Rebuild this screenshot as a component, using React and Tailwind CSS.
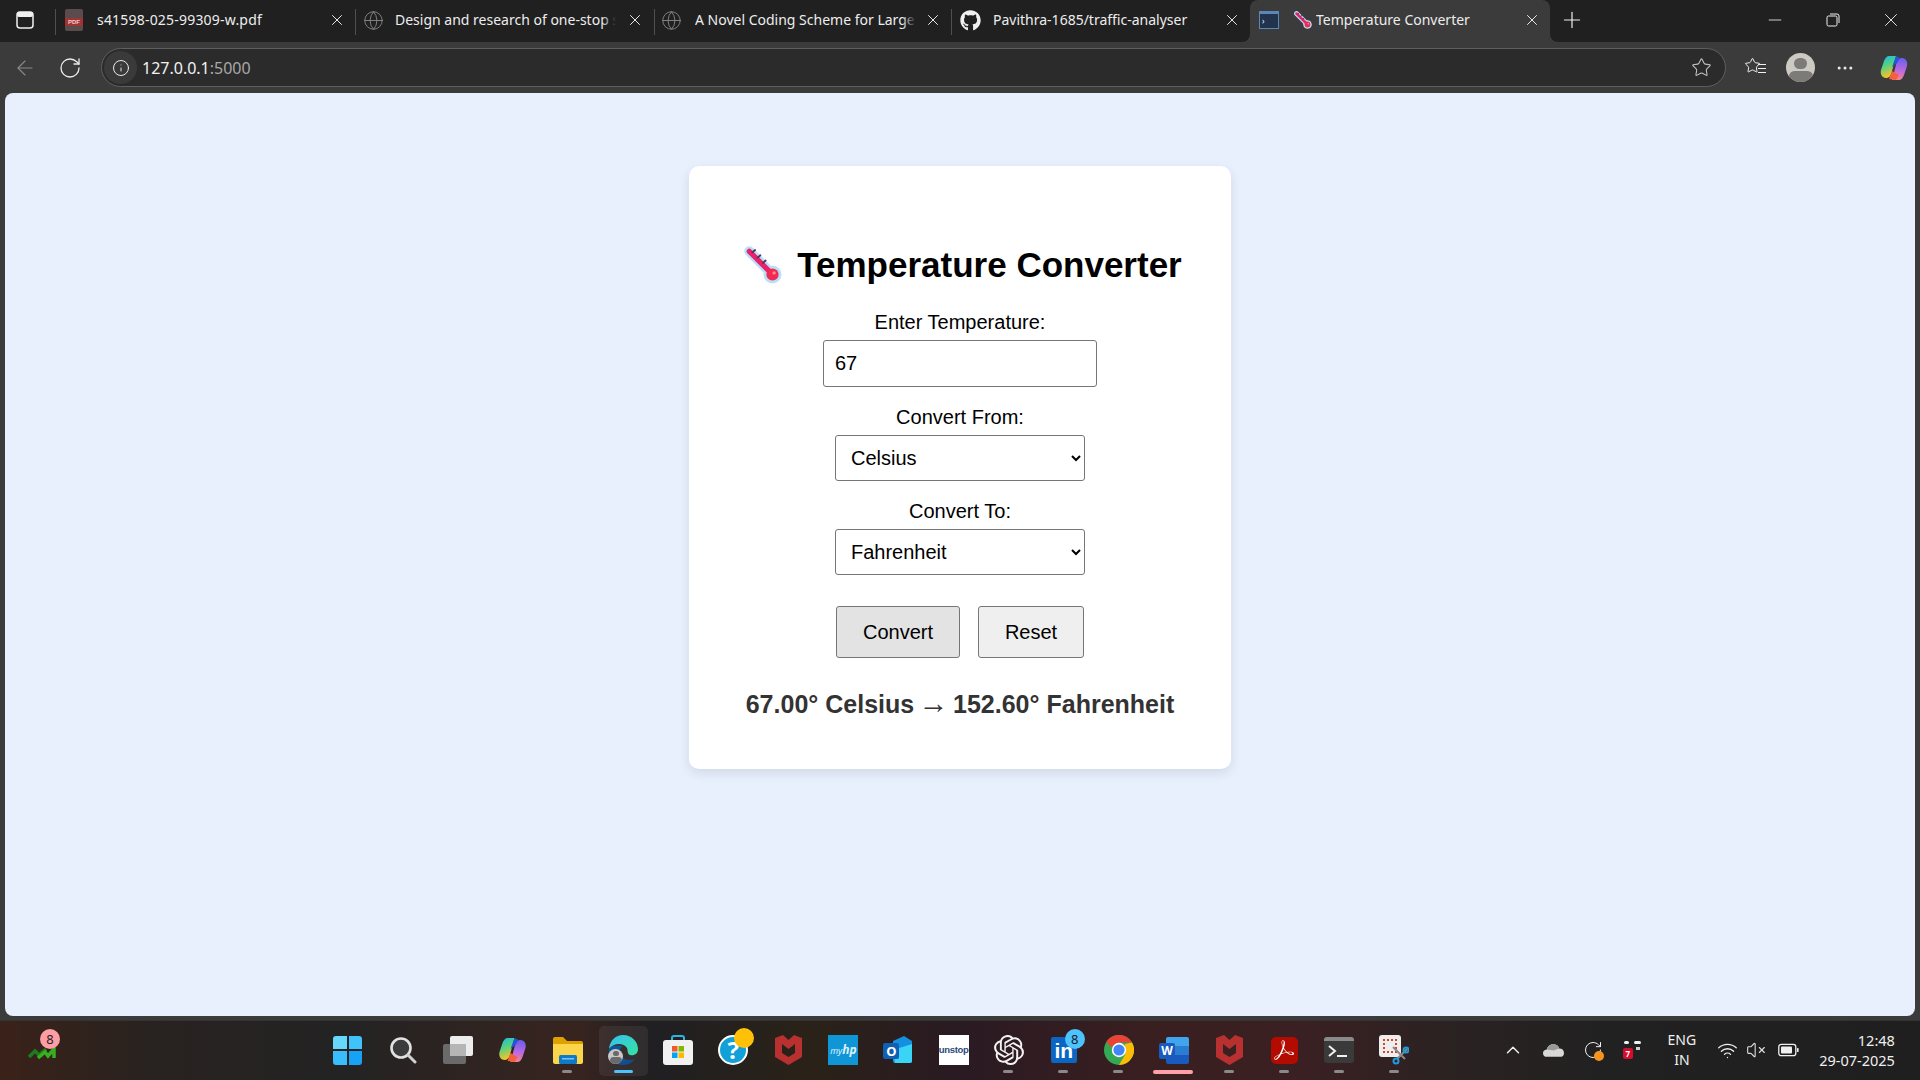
import React from 'react';
import { ArrowLeft, RotateCw, Info, X, Plus, Minus, Star, Globe, ChevronUp, Wifi, VolumeX, MoreHorizontal } from 'lucide-react';
import { FaGithub } from 'react-icons/fa';
import { SiOpenai, SiAdobeacrobatreader } from 'react-icons/si';

const Thermo = ({ className }) => (
  <svg viewBox="0 0 36 36" className={className}>
    <line x1="5" y1="5" x2="27" y2="27" stroke="#b9e0fa" strokeWidth="9.5" strokeLinecap="round" />
    <circle cx="27" cy="27" r="8.5" fill="#b9e0fa" />
    <line x1="5" y1="5" x2="26" y2="26" stroke="#e9236b" strokeWidth="5" strokeLinecap="round" />
    <circle cx="27" cy="27" r="5.8" fill="#f02a50" />
    <circle cx="28.5" cy="25.5" r="1.6" fill="#ff8a9a" />
    <path d="M8 4 L10.5 1.8 M13 9 L15.5 6.8 M18 14 L20.5 11.8" transform="translate(0 2)" stroke="#4a3a5a" strokeWidth="1.8" strokeLinecap="round" />
  </svg>
);

const Copilot = ({ className }) => (
  <svg viewBox="0 0 28 28" className={className}>
    <defs>
      <linearGradient id="cpa" x1="0" y1="0" x2="0.3" y2="1"><stop offset="0" stopColor="#1fb6e8" /><stop offset="0.45" stopColor="#4ad28a" /><stop offset="1" stopColor="#f6c228" /></linearGradient>
      <linearGradient id="cpb" x1="0.6" y1="0" x2="0.5" y2="1"><stop offset="0" stopColor="#6a5cf0" /><stop offset="0.6" stopColor="#c06adf" /><stop offset="1" stopColor="#f4848a" /></linearGradient>
    </defs>
    <path d="M9 2 L16 2 L12 17 C11 22 9 24 6 24 C2 24 0 20 1 16 L4 7 C5 4 7 2 9 2Z" fill="url(#cpa)" />
    <path d="M19 26 L12 26 L16 11 C17 6 19 4 22 4 C26 4 28 8 27 12 L24 21 C23 24 21 26 19 26Z" fill="url(#cpb)" />
    <path d="M12 17 L9 25 L16 26 L19 21Z" fill="#f2603c" />
    <path d="M16 2 L12 13 L17 9 L20 4 Z" fill="#2257d8" />
  </svg>
);

const Edge = () => (
  <div className="relative w-[30px] h-[30px]">
    <svg viewBox="0 0 30 30" className="w-[30px] h-[30px]">
      <defs>
        <linearGradient id="ega" x1="0" y1="0" x2="1" y2="1"><stop offset="0" stopColor="#35c1f1" /><stop offset="1" stopColor="#36e2a0" /></linearGradient>
        <linearGradient id="egb" x1="0" y1="0" x2="1" y2="1"><stop offset="0" stopColor="#0c59a4" /><stop offset="1" stopColor="#114a8b" /></linearGradient>
      </defs>
      <path d="M1 14 C2 5 8 0 15 0 C24 0 30 7 30 14 C30 19 26 21 22 20 C19 19 20 15 19 13 C16 8 6 7 1 14Z" fill="url(#ega)" />
      <path d="M1 14 C0 23 7 30 15 30 C20 30 25 27 27 24 C22 26 14 25 12 19 C11 15 13 12 15 11 C9 10 4 10 1 14Z" fill="url(#egb)" />
    </svg>
    <div className="absolute left-0 bottom-[1px] w-[15px] h-[15px] rounded-full bg-[#c8c8c8] overflow-hidden flex flex-col items-center">
      <div className="w-[6px] h-[6px] rounded-full bg-[#6a6a6a] mt-[2px]" />
      <div className="w-[12px] h-[8px] rounded-full bg-[#6a6a6a] mt-[1px]" />
    </div>
  </div>
);

const McAfee = ({ className }) => (
  <svg viewBox="0 0 27 30" className={className}>
    <path d="M0 3 L8 0 L13.5 5 L19 0 L27 3 L27 22 L13.5 30 L0 22Z M7 9 L7 18 L13.5 22 L20 18 L20 9 L13.5 14Z" fill="#b8302f" fillRule="evenodd" />
  </svg>
);

const Sep = () => <div className="w-px h-[26px] mt-[3px] bg-[#4f4f4f] shrink-0" />;

const CloseX = ({ cls }) => <X className={cls} size={18} strokeWidth={1.3} color="#ececec" />;

const Fade = () => <div className="absolute right-0 top-0 bottom-0 w-[14px] bg-gradient-to-r from-transparent to-[#202020]" />;

const Slot = ({ children, dot, wide }) => (
  <div className="relative w-[55.1px] h-full flex items-center justify-center shrink-0">
    {children}
    {dot && <div className="absolute bottom-[6px] left-[22px] w-[10px] h-[3px] rounded-full bg-[#8a8a8a]" />}
    {wide && <div className="absolute bottom-[5px] left-[7px] w-[40px] h-[4px] rounded-full bg-[#ffa0a8]" />}
  </div>
);

export default function App() {
  return (
    <div className="w-[1920px] h-[1080px] flex flex-col overflow-hidden bg-[#3b3b3b] font-['Liberation_Sans',sans-serif]">
      {/* tab strip */}
      <div className="h-[42px] flex shrink-0 text-[14px] text-[#ededed] font-['Noto_Sans',sans-serif]">
        <div className="w-[1250px] h-full bg-[#202020] rounded-br-lg flex items-center pb-[2px]">
          <svg viewBox="0 0 18 18" className="w-[18px] h-[18px] ml-[16px] mr-[21px] shrink-0">
            <rect x="1" y="1" width="16" height="16" rx="3" fill="none" stroke="#f0f0f0" strokeWidth="1.5" />
            <rect x="1" y="1" width="16" height="5" rx="2" fill="#f0f0f0" />
          </svg>
          <Sep />
          <div className="w-[299px] flex items-center shrink-0">
            <div className="ml-[9px] w-[18px] h-[22px] bg-[#5a4c4c] rounded-[2px] flex items-center justify-center shrink-0">
              <span className="w-full mt-[4px] bg-[#a03434] text-center text-[6px] leading-[8px] font-bold text-[#f0d0d0] font-['Liberation_Sans',sans-serif]">PDF</span>
            </div>
            <span className="ml-[14px] -mt-[2px] w-[230px] tracking-[0.2px] whitespace-nowrap overflow-hidden">s41598-025-99309-w.pdf</span>
            <CloseX cls="ml-[1px] shrink-0" />
          </div>
          <Sep />
          <div className="w-[298px] flex items-center shrink-0">
            <Globe size={21} strokeWidth={1} color="#8c8c8c" className="ml-[7px] shrink-0" />
            <span className="relative ml-[11px] -mt-[2px] w-[221px] whitespace-nowrap overflow-hidden">Design and research of one-stop s<Fade /></span>
            <CloseX cls="ml-[10px] shrink-0" />
          </div>
          <Sep />
          <div className="w-[296px] flex items-center shrink-0">
            <Globe size={21} strokeWidth={1} color="#8c8c8c" className="ml-[6px] shrink-0" />
            <span className="relative ml-[13px] -mt-[2px] w-[221px] whitespace-nowrap overflow-hidden">A Novel Coding Scheme for Large<Fade /></span>
            <CloseX cls="ml-[8px] shrink-0" />
          </div>
          <Sep />
          <div className="flex items-center flex-1">
            <FaGithub size={21} color="#f0f0f0" className="ml-[8px] shrink-0" />
            <span className="ml-[12px] -mt-[2px] w-[229px] whitespace-nowrap overflow-hidden">Pavithra-1685/traffic-analyser</span>
            <CloseX cls="ml-[1px] shrink-0" />
          </div>
        </div>
        <div className="w-[300px] h-full bg-[#202020]">
          <div className="h-full bg-[#3b3b3b] rounded-t-lg flex items-center pb-[2px]">
            <div className="ml-[9px] w-[20px] h-[18px] bg-[#22344d] border border-[#5a86b8] border-t-[3px] shrink-0 flex items-center">
              <span className="ml-[2px] text-[8px] leading-none text-white">›</span>
            </div>
            <Thermo className="ml-[15px] w-[18px] h-[18px] shrink-0" />
            <span className="ml-[4px] -mt-[2px] w-[206px] whitespace-nowrap overflow-hidden">Temperature Converter</span>
            <CloseX cls="ml-[1px] shrink-0" />
          </div>
        </div>
        <div className="flex-1 h-full bg-[#202020] rounded-bl-lg flex items-center pb-[2px]">
          <Plus size={26} strokeWidth={1.1} color="#f0f0f0" className="ml-[9px]" />
          <Minus size={20} strokeWidth={1} color="#f0f0f0" className="ml-[180px]" />
          <svg viewBox="0 0 14 14" className="w-[14px] h-[14px] ml-[41px]">
            <rect x="1" y="3" width="10" height="10" rx="1.5" fill="none" stroke="#f0f0f0" strokeWidth="1" />
            <path d="M4 1 H11 Q13 1 13 3 V10" fill="none" stroke="#f0f0f0" strokeWidth="1" />
          </svg>
          <X size={22} strokeWidth={1} color="#f0f0f0" className="ml-[40px]" />
        </div>
      </div>

      {/* toolbar */}
      <div className="h-[51px] flex items-center shrink-0">
        <ArrowLeft size={24} strokeWidth={1.1} color="#8a8a8a" className="ml-[13px]" />
        <RotateCw size={24} strokeWidth={1.3} color="#ececec" className="ml-[21px]" />
        <div className="ml-[19px] w-[1625px] h-[39px] rounded-full bg-[#2b2b2b] border border-[#5f5f5f] flex items-center font-['Noto_Sans',sans-serif]">
          <div className="ml-[2px] w-[33px] h-[33px] rounded-full bg-[#3a3a3a] flex items-center justify-center shrink-0">
            <Info size={18} strokeWidth={1.3} color="#ececec" />
          </div>
          <span className="ml-[5px] text-[16px] text-[#f2f2f2]">127.0.0.1<span className="text-[#a8a8a8]">:5000</span></span>
          <Star size={21} strokeWidth={1.2} color="#c4c4c4" className="ml-auto mr-[13px]" />
        </div>
        <div className="ml-[18px] relative w-[22px] h-[22px] shrink-0">
          <Star size={17} strokeWidth={1.4} color="#f0f0f0" />
          <div className="absolute right-0 top-[7px] w-[8px] h-px bg-[#f0f0f0]" />
          <div className="absolute right-0 top-[11px] w-[8px] h-px bg-[#f0f0f0]" />
          <div className="absolute right-0 top-[15px] w-[8px] h-px bg-[#f0f0f0]" />
        </div>
        <div className="ml-[20px] w-[29px] h-[29px] rounded-full bg-[#cdcac4] overflow-hidden flex flex-col items-center shrink-0">
          <div className="w-[13px] h-[13px] rounded-full bg-[#7d7b77] mt-[5px]" />
          <div className="w-[24px] h-[14px] rounded-full bg-[#7d7b77] mt-[2px]" />
        </div>
        <MoreHorizontal size={20} strokeWidth={1.6} color="#ececec" className="ml-[20px]" />
        <Copilot className="ml-[25px] w-[28px] h-[28px] shrink-0" />
      </div>

      {/* page */}
      <div className="flex-1 px-[5px] pb-[4px] min-h-0">
        <div className="h-full rounded-lg bg-[#e8f0fe] flex justify-center items-start pt-[73px]">
          <div className="w-[542px] h-[603px] bg-white rounded-[10px] shadow-[0_4px_12px_rgba(0,0,0,0.1)] flex flex-col items-center pt-[81px] text-[20px] leading-[23px] text-black">
            <div className="flex items-center h-[36px] pl-[6px]">
              <Thermo className="w-[38px] h-[38px] shrink-0" />
              <h1 className="ml-[15px] text-[35px] leading-[36px] font-bold whitespace-nowrap">Temperature Converter</h1>
            </div>
            <label className="mt-[28px]">Enter Temperature:</label>
            <input readOnly value="67" className="mt-[6px] w-[274px] h-[47px] px-[11px] bg-white border border-[#767676] rounded-[3px] text-[20px] outline-none" />
            <label className="mt-[19px]">Convert From:</label>
            <select defaultValue="c" className="mt-[6px] w-[250px] h-[46px] px-[11px] bg-white border border-[#767676] rounded-[3px] text-[20px]">
              <option value="c">Celsius</option>
              <option value="f">Fahrenheit</option>
            </select>
            <label className="mt-[19px]">Convert To:</label>
            <select defaultValue="f" className="mt-[6px] w-[250px] h-[46px] px-[11px] bg-white border border-[#767676] rounded-[3px] text-[20px]">
              <option value="c">Celsius</option>
              <option value="f">Fahrenheit</option>
            </select>
            <div className="mt-[31px] flex gap-[18px]">
              <button className="w-[124px] h-[52px] bg-[#e3e3e3] border border-[#767676] rounded-[3px] text-[20px]">Convert</button>
              <button className="w-[106px] h-[52px] bg-[#efefef] border border-[#767676] rounded-[3px] text-[20px]">Reset</button>
            </div>
            <p className="mt-[30px] text-[25px] leading-[28px] font-bold text-[#333333] whitespace-nowrap">67.00° Celsius <span className="font-normal text-[30px] leading-none -mx-[2.5px]">→</span> 152.60° Fahrenheit</p>
          </div>
        </div>
      </div>

      {/* taskbar */}
      <div className="h-[60px] shrink-0 border-t border-[#333333] pb-[1px] flex items-center bg-[linear-gradient(90deg,#3a2219_0%,#282220_8%,#232323_18%,#38241f_30%,#201f22_34%,#2a2218_42%,#2a1a22_50%,#3a1f20_60%,#3a2022_68%,#2a2222_76%,#212121_84%,#1f1f1f_100%)] font-['Noto_Sans',sans-serif]">
        <div className="relative w-[320px] h-full shrink-0">
          <svg viewBox="0 0 28 14" className="absolute left-[28px] top-[25px] w-[28px] h-[14px]">
            <path d="M1 11 L7 5 L11 9 L18 3" fill="none" stroke="#1f7a1f" strokeWidth="3.5" />
            <path d="M10 12 L17 6 L20 10 L26 3 V12" fill="none" stroke="#35b01f" strokeWidth="3.5" />
          </svg>
          <div className="absolute left-[40px] top-[8px] w-[20px] h-[20px] rounded-full bg-[#ff9da4] text-[#222] text-[13px] leading-[20px] text-center">8</div>
        </div>
        <Slot>
          <div className="w-[29px] h-[29px] grid grid-cols-2 gap-[2px]">
            <div className="rounded-tl-[3px] bg-[#66d8fb]" />
            <div className="rounded-tr-[3px] bg-[#40c2fb]" />
            <div className="rounded-bl-[3px] bg-[#3abdfb]" />
            <div className="rounded-br-[3px] bg-[#17a2f5]" />
          </div>
        </Slot>
        <Slot>
          <svg viewBox="0 0 28 28" className="w-[28px] h-[28px]">
            <circle cx="12" cy="12" r="9.5" fill="#3c3c3c" stroke="#e2e2e2" strokeWidth="2.6" />
            <line x1="19" y1="19" x2="26" y2="26" stroke="#d0d0d0" strokeWidth="3" strokeLinecap="round" />
          </svg>
        </Slot>
        <Slot>
          <div className="relative w-[30px] h-[28px]">
            <div className="absolute left-0 bottom-0 w-[23px] h-[20px] rounded-[2px] bg-[#6a6a6a]" />
            <div className="absolute right-0 top-0 w-[23px] h-[20px] rounded-[2px] bg-[#ececec]" />
            <div className="absolute left-[7px] top-[8px] w-[16px] h-[12px] bg-[#b5b5b5]" />
          </div>
        </Slot>
        <Slot><Copilot className="w-[29px] h-[28px]" /></Slot>
        <Slot dot>
          <svg viewBox="0 0 30 27" className="w-[30px] h-[27px]">
            <path d="M0 2 Q0 0 2 0 H10 L14 4 H28 Q30 4 30 6 V10 H0Z" fill="#e0a000" />
            <path d="M0 7 H30 V25 Q30 27 28 27 H2 Q0 27 0 25Z" fill="#fcd64a" />
            <rect x="6" y="18" width="18" height="9" rx="1.5" fill="#0f79c9" />
            <rect x="9" y="21" width="12" height="1.5" fill="#7cc4f2" />
          </svg>
        </Slot>
        <div className="relative w-[55.1px] h-full flex items-center justify-center shrink-0">
          <div className="absolute left-[4px] top-[5px] w-[49px] h-[50px] rounded-[5px] bg-[#ffffff10]" />
          <div className="relative"><Edge /></div>
          <div className="absolute bottom-[6px] left-[19px] w-[19px] h-[3px] rounded-full bg-[#4cc2ff]" />
        </div>
        <Slot>
          <svg viewBox="0 0 30 30" className="w-[30px] h-[30px]">
            <path d="M9 7 V3 Q9 1 11 1 H19 Q21 1 21 3 V7" fill="none" stroke="#2bb3e6" strokeWidth="2" />
            <rect x="0" y="5" width="30" height="25" rx="3" fill="#f1f1f1" />
            <rect x="9" y="11" width="5.5" height="5.5" fill="#f05a28" />
            <rect x="15.5" y="11" width="5.5" height="5.5" fill="#7fba00" />
            <rect x="9" y="17.5" width="5.5" height="5.5" fill="#00a4ef" />
            <rect x="15.5" y="17.5" width="5.5" height="5.5" fill="#ffb900" />
          </svg>
        </Slot>
        <Slot>
          <div className="relative w-[30px] h-[30px] rounded-full bg-[#12a0d8] border-2 border-white flex items-center justify-center">
            <span className="text-white text-[24px] font-bold leading-none">?</span>
            <div className="absolute left-[14px] -top-[9px] w-[20px] h-[20px] rounded-full bg-[#ffc107]" />
          </div>
        </Slot>
        <Slot><McAfee className="w-[27px] h-[30px]" /></Slot>
        <Slot>
          <div className="w-[30px] h-[30px] bg-[#0f96d6] flex items-center justify-center text-[#dff2fb] text-[9px] italic leading-none">my<span className="font-bold text-[12px]">hp</span></div>
        </Slot>
        <Slot>
          <div className="relative w-[30px] h-[30px]">
            <svg viewBox="0 0 30 30" className="w-[30px] h-[30px]">
              <path d="M10 6 L21 1 L29 6 V26 Q29 28 27 28 H12 Q10 28 10 26Z" fill="#1490df" />
              <path d="M10 15 L29 9 V26 Q29 28 27 28 H12 Z" fill="#3ad4f7" />
            </svg>
            <div className="absolute left-0 top-[8px] w-[16px] h-[16px] bg-[#0f5fb5] rounded-[2px] text-white text-[13px] font-bold leading-[16px] text-center">O</div>
          </div>
        </Slot>
        <Slot>
          <div className="w-[30px] h-[30px] bg-white flex items-center justify-center text-[#2a4a78] text-[9.5px] font-bold leading-none tracking-[-0.3px] font-['Liberation_Sans',sans-serif]">unstop</div>
        </Slot>
        <Slot dot><SiOpenai size={30} color="#f2f2f2" /></Slot>
        <Slot dot>
          <div className="relative w-[26px] h-[26px] bg-[#0a66c2] rounded-[2px] flex items-center justify-center text-white text-[21px] font-bold leading-none font-['Liberation_Sans',sans-serif]">
            in
            <div className="absolute left-[14px] -top-[8px] w-[20px] h-[20px] rounded-full bg-[#4cc2ff] text-[#1a1a1a] text-[13px] leading-[20px] text-center font-normal font-['Noto_Sans',sans-serif]">8</div>
          </div>
        </Slot>
        <Slot dot>
          <svg viewBox="0 0 30 30" className="w-[30px] h-[30px]">
            <circle cx="15" cy="15" r="15" fill="#34a853" />
            <path d="M15 0 A15 15 0 0 1 28 7.5 L15 7.5 L6.5 12 L2.5 6.5 A15 15 0 0 1 15 0Z" fill="#ea4335" />
            <path d="M28 7.5 A15 15 0 0 1 15 30 L21.5 19 L21 9Z" fill="#fbbc05" />
            <circle cx="15" cy="15" r="7.2" fill="#fff" />
            <circle cx="15" cy="15" r="5.6" fill="#4285f4" />
          </svg>
        </Slot>
        <Slot wide>
          <div className="relative w-[30px] h-[27px]">
            <div className="absolute right-0 top-0 w-[23px] h-[27px] rounded-[2px] overflow-hidden flex flex-col">
              <div className="flex-1 bg-[#41a5ee]" />
              <div className="flex-1 bg-[#2b7cd3]" />
              <div className="flex-1 bg-[#185abd]" />
            </div>
            <div className="absolute left-0 top-[6px] w-[16px] h-[16px] bg-[#185abd] rounded-[2px] text-white text-[12px] font-bold leading-[16px] text-center">W</div>
          </div>
        </Slot>
        <Slot dot><McAfee className="w-[27px] h-[30px]" /></Slot>
        <Slot dot>
          <div className="w-[27px] h-[27px] rounded-[5px] bg-[#b30b00] flex items-center justify-center">
            <SiAdobeacrobatreader size={20} color="#ffffff" />
          </div>
        </Slot>
        <Slot dot>
          <div className="w-[30px] h-[26px] rounded-[3px] bg-[#3a3a3a] overflow-hidden">
            <div className="h-[4px] bg-[#8a8a8a]" />
            <svg viewBox="0 0 30 22" className="w-[30px] h-[22px]">
              <path d="M5 5 L11 10 L5 15" fill="none" stroke="#f0f0f0" strokeWidth="2" />
              <rect x="13" y="14" width="10" height="2" fill="#f0f0f0" />
            </svg>
          </div>
        </Slot>
        <Slot dot>
          <div className="relative w-[30px] h-[30px]">
            <div className="absolute left-0 top-0 w-[22px] h-[22px] rounded-[3px] bg-[#eeeeee] flex items-center justify-center">
              <div className="w-[14px] h-[14px] border-2 border-dotted border-[#d9432a]" />
            </div>
            <svg viewBox="0 0 18 20" className="absolute right-0 bottom-0 w-[18px] h-[20px]">
              <path d="M2 2 L14 14 M16 4 L6 14" stroke="#8a8a8a" strokeWidth="2" />
              <circle cx="15" cy="5" r="2.5" fill="none" stroke="#1f9be0" strokeWidth="2" />
              <circle cx="5" cy="16" r="2.5" fill="none" stroke="#1f9be0" strokeWidth="2" />
            </svg>
          </div>
        </Slot>

        <ChevronUp size={22} strokeWidth={1.6} color="#f0f0f0" className="ml-[80px] shrink-0" />
        <svg viewBox="0 0 20 13" className="ml-[19px] w-[21px] h-[14px] shrink-0">
          <path d="M4 13 Q0 13 0 9.5 Q0 6.5 3.5 6 Q5 1 10 1 Q14 1 15.5 5 Q20 5 20 9.5 Q20 13 16 13Z" fill="#d8d8d8" />
          <path d="M3.5 6 Q5 1 10 1 Q14 1 15.5 5 L10 7Z" fill="#9a9a9a" />
        </svg>
        <div className="ml-[19px] relative w-[20px] h-[20px] shrink-0">
          <RotateCw size={20} strokeWidth={1.2} color="#f0f0f0" />
          <div className="absolute right-[-1px] bottom-[-1px] w-[10px] h-[10px] rounded-full bg-[#f7931e]" />
        </div>
        <div className="ml-[20px] relative w-[19px] h-[18px] shrink-0">
          <div className="absolute left-0 bottom-0 w-[10px] h-[11px] rounded-[2px] bg-[#d60b2d] text-white text-[8px] font-bold leading-[11px] text-center">7</div>
          <div className="absolute left-[1px] top-0 w-[5px] h-[3px] rounded-full bg-[#f0f0f0]" />
          <div className="absolute left-[11px] top-0 w-[7px] h-[3px] rounded-full bg-[#f0f0f0]" />
          <div className="absolute left-[13px] top-[6px] w-[4px] h-[3px] bg-[#d0d0d0]" />
        </div>
        <div className="ml-[25px] w-[30px] text-[#f0f0f0] text-[14px] leading-[20px] text-center shrink-0">
          <div>ENG</div>
          <div>IN</div>
        </div>
        <Wifi size={21} strokeWidth={1.5} color="#f0f0f0" className="ml-[20px] shrink-0" />
        <VolumeX size={20} strokeWidth={1.3} color="#e0e0e0" className="ml-[8px] shrink-0" />
        <svg viewBox="0 0 21 13" className="ml-[12px] w-[21px] h-[14px] shrink-0">
          <rect x="0.8" y="0.8" width="17" height="11.4" rx="2.5" fill="none" stroke="#f0f0f0" strokeWidth="1.3" />
          <rect x="3" y="3" width="11" height="7" rx="1" fill="#f0f0f0" />
          <rect x="19" y="4.5" width="1.6" height="4" rx="0.6" fill="#f0f0f0" />
        </svg>
        <div className="ml-[19px] w-[77px] text-right text-[#f0f0f0] text-[14.5px] leading-[20px] whitespace-nowrap shrink-0">
          <div>12:48</div>
          <div>29-07-2025</div>
        </div>
      </div>
    </div>
  );
}
